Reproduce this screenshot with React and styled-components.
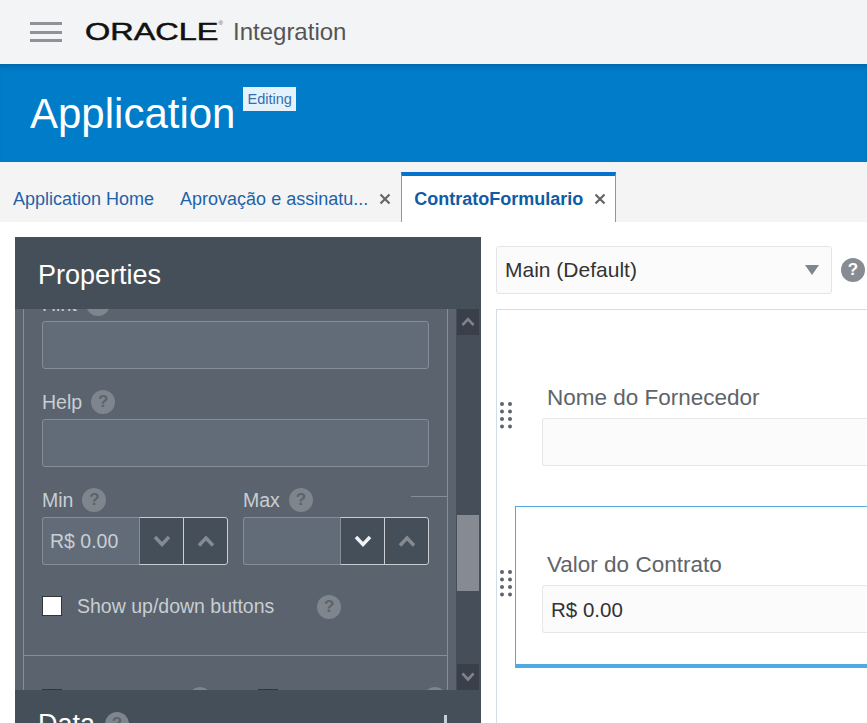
import React from 'react'
import styled, { createGlobalStyle } from 'styled-components'

const GlobalStyle = createGlobalStyle`
  html, body {
    margin: 0;
    padding: 0;
    overflow: hidden;
    background: #fff;
  }
  * { box-sizing: border-box; }
`

const Page = styled.div`
  width: 867px;
  height: 723px;
  overflow: hidden;
  display: flex;
  flex-direction: column;
  font-family: "Liberation Sans", Arial, sans-serif;
`

const TopBar = styled.header`
  height: 64px;
  flex: none;
  display: flex;
  align-items: center;
  padding-left: 30px;
  background: #f3f4f5;
`

const Burger = styled.div`
  width: 32px;
  height: 20px;
  margin-right: 23px;
  display: flex;
  flex-direction: column;
  justify-content: space-between;
  span {
    height: 3px;
    background: #8f9397;
  }
`

const LogoBox = styled.div`
  width: 135px;
  height: 24px;
  margin-right: 13px;
  position: relative;
`

const LogoWord = styled.span`
  display: block;
  font-size: 23px;
  line-height: 24px;
  font-weight: 400;
  color: #111;
  -webkit-text-stroke: 0.5px #111;
  transform: scaleX(1.41);
  transform-origin: left center;
  white-space: nowrap;
`

const LogoMark = styled.span`
  position: absolute;
  right: -3px;
  top: 0;
  font-size: 6px;
  line-height: 7px;
  color: #555;
`

const Product = styled.span`
  font-size: 24px;
  color: #555;
`

const Banner = styled.div`
  height: 98px;
  flex: none;
  display: flex;
  align-items: flex-start;
  padding: 23px 0 0 30px;
  background: #007cc8;
  box-shadow: inset 0 5px 5px -3px rgba(0, 50, 90, 0.35);
`

const Title = styled.h1`
  margin: 0 8px 0 0;
  font-size: 42px;
  line-height: 54px;
  font-weight: 400;
  color: #fff;
`

const Badge = styled.span`
  height: 24px;
  padding: 0 4px;
  font-size: 14.5px;
  line-height: 24px;
  color: #2f6fb3;
  background: #e6f2fb;
`

const TabBar = styled.nav`
  height: 60px;
  flex: none;
  display: flex;
  align-items: flex-end;
  padding-left: 13px;
  background: #f4f4f5;
`

const Tab = styled.div`
  height: 50px;
  display: flex;
  align-items: center;
  margin-right: ${p => p.$gap || 0}px;
  padding: 0 ${p => (p.$active ? 9 : 0)}px 0 ${p => (p.$active ? 12 : 0)}px;
  font-size: 18px;
  font-weight: ${p => (p.$active ? 700 : 400)};
  color: ${p => (p.$active ? '#0f5ca6' : '#1f62a8')};
  white-space: nowrap;
  background: ${p => (p.$active ? '#fff' : 'transparent')};
  border-style: solid;
  border-width: 4px 1px 0;
  border-color: ${p => (p.$active ? '#0572ce #7d9cba' : 'transparent')};
  margin-left: ${p => (p.$active ? 0 : -1)}px;
`

const CloseIcon = styled.svg`
  width: 12px;
  height: 12px;
  margin-left: 11px;
  flex: none;
`

const Main = styled.main`
  flex: 1;
  min-height: 0;
  display: flex;
  padding: 15px 0 0 15px;
`

const Panel = styled.section`
  width: 466px;
  flex: none;
  display: flex;
  flex-direction: column;
  overflow: hidden;
`

const PanelHead = styled.div`
  height: ${p => p.$height}px;
  flex: none;
  display: flex;
  padding: ${p => p.$top}px 34px 0 23px;
  background: #454f5a;
  color: #fff;
  font-size: 27px;
  line-height: 32px;
  position: relative;
  z-index: 1;
`

const PanelBody = styled.div`
  height: 381px;
  flex: none;
  display: flex;
`

const ScrollArea = styled.div`
  width: 441px;
  flex: none;
  overflow: hidden;
  padding: 0 8px 0 8px;
  background: #5a636e;
`

const Frame = styled.div`
  position: relative;
  height: 500px;
  margin-top: -17px;
  padding-left: 18px;
  border-left: 1px solid #868d96;
  border-right: 1px solid #868d96;
`

const LabelRow = styled.div`
  height: 24px;
  margin-bottom: 5px;
  display: flex;
  align-items: center;
  font-size: 19.5px;
  color: #c9ced3;
`

const Field = styled.div`
  margin-bottom: 21px;
`

const TextBox = styled.div`
  width: 387px;
  height: 48px;
  background: #626c78;
  border: 1px solid #868d96;
  border-radius: 3px;
`

const Help = styled.span`
  width: 24px;
  height: 24px;
  flex: none;
  margin-left: ${p => p.$left || 0}px;
  display: inline-flex;
  align-items: center;
  justify-content: center;
  border-radius: 50%;
  font-size: 17px;
  font-weight: 700;
  color: ${p => (p.$light ? '#fff' : '#5a636e')};
  background: ${p => (p.$light ? '#878c93' : '#7f858d')};
`

const SpinnerRow = styled.div`
  display: grid;
  grid-template-columns: 186px 186px;
  column-gap: 15px;
`

const Spinner = styled.div`
  height: 48px;
  display: flex;
`

const SpinnerInput = styled.div`
  flex: 1;
  padding-left: 7px;
  font-size: 19.5px;
  line-height: 46px;
  color: #c9ced3;
  background: #626c78;
  border: 1px solid #868d96;
  border-right: 0;
  border-radius: 3px 0 0 3px;
`

const SpinButton = styled.div`
  width: 45px;
  display: flex;
  align-items: center;
  justify-content: center;
  background: #454f5a;
  border: 1px solid #c9ced3;
  border-left-color: ${p => (p.$first ? '#868d96' : '#c9ced3')};
  border-radius: ${p => (p.$last ? '0 3px 3px 0' : '0')};
  margin-left: ${p => (p.$first ? 0 : -1)}px;
  svg {
    color: ${p => (p.$bright ? '#f2f3f4' : '#868b91')};
  }
`

const CheckRow = styled.div`
  height: 24px;
  margin-top: 30px;
  display: flex;
  align-items: center;
`

const Checkbox = styled.span`
  width: 20px;
  height: 20px;
  flex: none;
  margin: ${p => (p.$dark ? '2px 0 0' : '0 0 2px')};
  background: ${p => (p.$dark ? '#3c444e' : '#fff')};
  border: 1px solid #30363d;
`

const CheckLabel = styled.span`
  margin-left: 15px;
  padding-bottom: 2px;
  font-size: 19.5px;
  color: #c9ced3;
`

const Divider = styled.div`
  height: 1px;
  margin: 36px 0 31px -18px;
  background: #868d96;
`

const StubRow = styled.div`
  display: grid;
  grid-template-columns: 216px 186px;
`

const StubCell = styled.div`
  display: flex;
  align-items: flex-start;
`

const Tick = styled.div`
  position: absolute;
  top: 204px;
  right: 0;
  width: 36px;
  height: 1px;
  background: #868d96;
`

const ScrollTrack = styled.div`
  width: 25px;
  flex: none;
  display: flex;
  flex-direction: column;
  padding: 0 2px 0 1px;
  background: #454e59;
`

const ScrollArrow = styled.div`
  height: 26px;
  flex: none;
  display: flex;
  align-items: center;
  justify-content: center;
  background: #39404a;
  color: #7f8389;
`

const ScrollThumb = styled.div`
  height: 76px;
  flex: none;
  margin: 180px 0 73px;
  background: #868a93;
`

const PlusBar = styled.span`
  width: 3px;
  height: 20px;
  margin: 8px 0 0 auto;
  background: #c9ced3;
`

const DataTitle = styled.span`
  display: flex;
  align-items: center;
  height: 32px;
  margin-top: 1px;
`

const Designer = styled.div`
  flex: 1;
  min-width: 0;
  padding-left: 15px;
`

const SelectRow = styled.div`
  display: flex;
  align-items: center;
  margin-top: 9px;
`

const Select = styled.div`
  width: 336px;
  height: 48px;
  display: flex;
  align-items: center;
  justify-content: space-between;
  padding: 0 12px 0 8px;
  font-size: 21px;
  color: #333;
  background: #fbfbfb;
  border: 1px solid #e3e5e8;
  border-radius: 3px;
`

const Caret = styled.span`
  width: 0;
  height: 0;
  border-left: 7.5px solid transparent;
  border-right: 7.5px solid transparent;
  border-top: 10px solid #7f868e;
`

const Canvas = styled.div`
  width: 420px;
  height: 420px;
  margin-top: 15px;
  padding-top: 74px;
  background: #fff;
  border: 1px solid #d4dde6;
  border-right: 0;
  border-bottom: 0;
`

const FormRow = styled.div`
  display: flex;
  align-items: flex-start;
  margin-bottom: 40px;
`

const DragCol = styled.div`
  width: 18px;
  flex: none;
  display: flex;
  padding: ${p => p.$top}px 0 0 3px;
`

const FormField = styled.div`
  flex: 1;
  padding: 0 0 0 27px;
`

const SelectedBox = styled.div`
  flex: 1;
  padding: 44px 0 31px 26px;
  border: 1px solid #4fa9e3;
  border-right: 0;
  border-bottom: 4px solid #4fa9e3;
`

const FormLabel = styled.div`
  height: 26px;
  margin: 0 0 8px 5px;
  font-size: 22.5px;
  line-height: 28px;
  color: #5f6469;
  white-space: nowrap;
`

const FormInput = styled.div`
  height: 48px;
  padding-left: 8px;
  font-size: 20.5px;
  line-height: 48px;
  color: #333;
  background: #fbfbfb;
  border: 1px solid #e6e7e9;
  border-right: 0;
  border-radius: 3px 0 0 3px;
`

const Close = () => (
  <CloseIcon viewBox="0 0 12 12">
    <path d="M1.5 1.5l9 9M10.5 1.5l-9 9" stroke="#666" strokeWidth="2.2" fill="none" />
  </CloseIcon>
)

const Chevron = ({ up, size = 20 }) => (
  <svg width={size} height={size * 0.7} viewBox="0 0 20 14" fill="none">
    <path
      d={up ? 'M3 11.5l7-7.5 7 7.5' : 'M3 3l7 7.5 7-7.5'}
      stroke="currentColor"
      strokeWidth="3.4"
    />
  </svg>
)

const Dots = () => (
  <svg width="12" height="28" viewBox="0 0 12 28" fill="#5d646c">
    {[2, 9.5, 17, 24.5].map(y => (
      <g key={y}>
        <circle cx="2" cy={y} r="2" />
        <circle cx="10" cy={y} r="2" />
      </g>
    ))}
  </svg>
)

function App() {
  return (
    <Page>
      <GlobalStyle />
      <TopBar>
        <Burger><span /><span /><span /></Burger>
        <LogoBox>
          <LogoWord>ORACLE</LogoWord>
          <LogoMark>®</LogoMark>
        </LogoBox>
        <Product>Integration</Product>
      </TopBar>

      <Banner>
        <Title>Application</Title>
        <Badge>Editing</Badge>
      </Banner>

      <TabBar>
        <Tab $gap={25}>Application Home</Tab>
        <Tab $gap={9}>Aprovação e assinatu...<Close /></Tab>
        <Tab $active>ContratoFormulario<Close /></Tab>
      </TabBar>

      <Main>
        <Panel>
          <PanelHead $height={72} $top={22}>Properties</PanelHead>
          <PanelBody>
            <ScrollArea>
              <Frame>
                <Tick />
                <Field>
                  <LabelRow>Hint<Help $left={9}>?</Help></LabelRow>
                  <TextBox />
                </Field>
                <Field>
                  <LabelRow>Help<Help $left={9}>?</Help></LabelRow>
                  <TextBox />
                </Field>
                <SpinnerRow>
                  <div>
                    <LabelRow>Min<Help $left={9}>?</Help></LabelRow>
                    <Spinner>
                      <SpinnerInput>R$ 0.00</SpinnerInput>
                      <SpinButton $first><Chevron /></SpinButton>
                      <SpinButton $last><Chevron up /></SpinButton>
                    </Spinner>
                  </div>
                  <div>
                    <LabelRow>Max<Help $left={9}>?</Help></LabelRow>
                    <Spinner>
                      <SpinnerInput />
                      <SpinButton $first $bright><Chevron /></SpinButton>
                      <SpinButton $last><Chevron up /></SpinButton>
                    </Spinner>
                  </div>
                </SpinnerRow>
                <CheckRow>
                  <Checkbox />
                  <CheckLabel>Show up/down buttons</CheckLabel>
                  <Help $left={43}>?</Help>
                </CheckRow>
                <Divider />
                <StubRow>
                  <StubCell><Checkbox $dark /><Help $left={126}>?</Help></StubCell>
                  <StubCell><Checkbox $dark /><Help $left={145}>?</Help></StubCell>
                </StubRow>
              </Frame>
            </ScrollArea>
            <ScrollTrack>
              <ScrollArrow><Chevron up size={16} /></ScrollArrow>
              <ScrollThumb />
              <ScrollArrow><Chevron size={16} /></ScrollArrow>
            </ScrollTrack>
          </PanelBody>
          <PanelHead $height={33} $top={17}>
            <DataTitle>Data<Help $left={10}>?</Help></DataTitle>
            <PlusBar />
          </PanelHead>
        </Panel>

        <Designer>
          <SelectRow>
            <Select>Main (Default)<Caret /></Select>
            <Help $left={9} $light>?</Help>
          </SelectRow>
          <Canvas>
            <FormRow>
              <DragCol $top={18}><Dots /></DragCol>
              <FormField>
                <FormLabel>Nome do Fornecedor</FormLabel>
                <FormInput />
              </FormField>
            </FormRow>
            <FormRow>
              <DragCol $top={64}><Dots /></DragCol>
              <SelectedBox>
                <FormLabel>Valor do Contrato</FormLabel>
                <FormInput>R$ 0.00</FormInput>
              </SelectedBox>
            </FormRow>
          </Canvas>
        </Designer>
      </Main>
    </Page>
  )
}

export default App
